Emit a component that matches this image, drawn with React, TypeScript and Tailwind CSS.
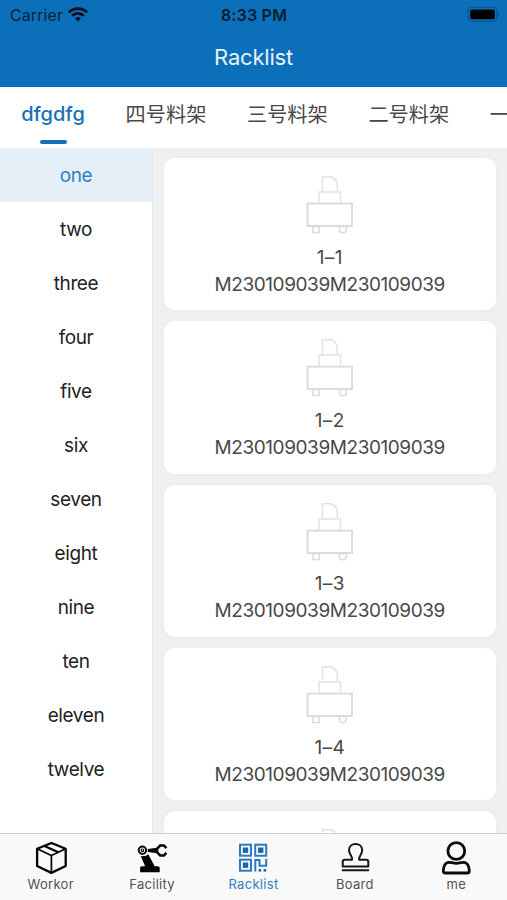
import type { ReactNode } from 'react';

const rows = ['one', 'two', 'three', 'four', 'five', 'six', 'seven', 'eight', 'nine', 'ten', 'eleven', 'twelve'];
const racks = ['四号料架', '三号料架', '二号料架', '一号料架'];
const cards = ['1–1', '1–2', '1–3', '1–4'];

function Wifi() {
  return (
    <svg width="20" height="15" viewBox="0 0 20 15" fill="none" stroke="#071018" strokeWidth="2.7">
      <path d="M.9 5.3a13 13 0 0 1 18.2 0" />
      <path d="M4.2 8.8a8.3 8.3 0 0 1 11.6 0" />
      <path d="m10 14.4-2.9-2.9a4.1 4.1 0 0 1 5.8 0z" fill="#071018" stroke="none" />
    </svg>
  );
}

function Battery() {
  return (
    <svg width="34" height="16" viewBox="0 0 34 16">
      <rect x="1" y=".3" width="29" height="14" rx="4" fill="none" stroke="#095590" strokeWidth="1.3" />
      <rect x="3.2" y="2.4" width="24.6" height="9.8" rx="2" fill="#000" />
      <path d="M31.3 5.2v4c1.8-.5 1.8-3.5 0-4z" fill="#095590" />
    </svg>
  );
}

function Machine() {
  return (
    <svg width="48" height="60" viewBox="0 0 48 60" fill="none" strokeWidth="1.5">
      <path d="M16.5 16.5V1.7h8.6q5.4 2.2 6.2 7.3v7.5" stroke="#e8e1e1" />
      <path d="M13 27.5V17h21.5v10.5" stroke="#eae0e0" />
      <rect x="1.6" y="28.6" width="44.4" height="22.4" stroke="#dcdadb" strokeWidth="1.9" />
      <rect x="7" y="51.6" width="6.2" height="6" stroke="#dddadb" />
      <path d="M33.5 51.6h6.8v3.2c0 4-6.8 4-6.8 0z" stroke="#dddadb" />
    </svg>
  );
}

function Cube() {
  return (
    <svg width="34" height="34" viewBox="0 0 34 34" fill="none" stroke="#050505" strokeWidth="2.3" strokeLinejoin="round">
      <path d="M17.4 2 31.7 7.8v17.2l-14.3 6.9L3.1 25V7.8z" />
      <path d="m3.1 7.8 14.3 6.6 14.3-6.6M17.4 14.4v17.5" strokeWidth="1.7" />
      <path d="m9.8 4.8 14.6 6.4" strokeWidth="2.2" />
    </svg>
  );
}

function RobotArm() {
  return (
    <svg width="34" height="34" viewBox="0 0 34 34" fill="none" stroke="#050505">
      <circle cx="7.4" cy="9.3" r="3.7" strokeWidth="2" />
      <circle cx="7.4" cy="9.3" r="1.3" strokeWidth="1.1" />
      <path d="M12.8 8.1 22 6.8v5.4l-9.2-1.3z" fill="#050505" stroke="none" />
      <path d="m31.4 7.2-2.5-2.7h-3.7l-3.1 3.3v3.5l3.1 3.1h3.7l2.5-2.6" strokeWidth="2.5" />
      <path d="m5.8 15.3 5.5-.6 1.8-1.7 6.6 12.2h3.1c1.2 0 1.9.8 1.9 1.8v4.3H5.1V27c0-1 .7-1.8 1.9-1.8h3.1z" fill="#050505" stroke="none" />
    </svg>
  );
}

function CodeGrid() {
  return (
    <svg width="34" height="34" viewBox="0 0 34 34" fill="none" stroke="#2b7ac0" strokeWidth="2">
      <rect x="4" y="3.7" width="11" height="11" />
      <rect x="19.2" y="3.7" width="11" height="11" />
      <rect x="4" y="18.7" width="11" height="11" />
      <g fill="#1767b0" stroke="none">
        <rect x="6.8" y="6.5" width="5.4" height="5.4" />
        <rect x="22" y="6.5" width="5.4" height="5.4" />
        <rect x="6.8" y="21.5" width="5.4" height="5.4" />
        <rect x="22.6" y="28" width="2.6" height="2.6" />
        <rect x="27.6" y="28" width="2.6" height="2.6" />
      </g>
      <path d="M19.3 30.6V18.9h4.2v5.9h6.7v-7" />
    </svg>
  );
}

function Stamp() {
  return (
    <svg width="34" height="34" viewBox="0 0 34 34" fill="none" stroke="#151515" strokeWidth="2" strokeLinejoin="round" strokeLinecap="round">
      <path d="M14 18.7c1-3.2-3-5.3-3-9.5 0-8.4 13.2-8.4 13.2 0 0 4.2-4 6.3-3 9.5h7c1.6 0 2.1.8 2.1 2.1v4.8H4.7v-4.8c0-1.3.7-2.1 2.1-2.1z" />
      <path d="M4.7 29.3h25.6" />
    </svg>
  );
}

function Person() {
  return (
    <svg width="34" height="34" viewBox="0 0 34 34" fill="none" stroke="#0b0b0b" strokeWidth="2.8" strokeLinejoin="round">
      <circle cx="17.3" cy="10" r="8.4" />
      <path d="M9.8 21.3c2.7 0 3.7 1 7.5 1s4.8-1 7.5-1c3.8 0 5.5 4.7 5.5 8.6 0 1.5-.7 2.1-2 2.1h-22c-1.3 0-2-.6-2-2.1 0-3.9 1.7-8.6 5.5-8.6z" />
    </svg>
  );
}

const navigation: { label: string; icon: ReactNode; active?: boolean }[] = [
  { label: 'Workor', icon: <Cube /> },
  { label: 'Facility', icon: <RobotArm /> },
  { label: 'Racklist', icon: <CodeGrid />, active: true },
  { label: 'Board', icon: <Stamp /> },
  { label: 'me', icon: <Person /> },
];

function RackCard({ label }: { label?: string }) {
  return (
    <article className="flex h-[152.3px] shrink-0 flex-col items-center rounded-[11px] bg-white pt-[17px] text-[19px] leading-[27px] text-[#484848] shadow-[0_0_7px_#00000008]">
      <Machine />
      {label && (
        <>
          <span className="mt-[8.5px] tracking-[0.4px]">{label}</span>
          <span className="tracking-[-0.43px]">M230109039M230109039</span>
        </>
      )}
    </article>
  );
}

export default function App() {
  return (
    <div className="flex h-[900px] w-[507px] flex-col overflow-hidden bg-white font-['Inter','Noto_Sans_CJK_SC',sans-serif]">
      <header className="h-[87px] shrink-0 bg-[#0c6fb9]">
        <div className="grid h-[29px] grid-cols-3 items-center pl-[10px] pr-[6px] text-[#09233a]">
          <div className="flex items-center gap-[5px] text-[16px] tracking-[0.1px]">
            <span>Carrier</span>
            <Wifi />
          </div>
          <span className="pr-[3px] text-center text-[16px] font-semibold tracking-[0.2px] text-[#061d30]">8:33 PM</span>
          <div className="flex justify-end"><Battery /></div>
        </div>
        <h1 className="pt-[12px] text-center text-[22px] leading-[32px] tracking-[-0.2px] text-[#e5f2fc]">Racklist</h1>
      </header>

      <nav className="flex h-[61px] shrink-0 gap-[40.6px] overflow-hidden pl-[21px] text-[20.2px] text-[#484848]">
        <button className="flex w-[64px] shrink-0 flex-col items-center text-[#1670b7]">
          <span className="h-[53px] pt-[12px] text-[20px] font-medium leading-[30px]">dfgdfg</span>
          <span className="h-[4px] w-[27px] rounded-full bg-[#1670b7]" />
        </button>
        {racks.map((rack) => (
          <button key={rack} className="flex w-[80.8px] shrink-0 pt-[13px] leading-[30px] whitespace-nowrap">{rack}</button>
        ))}
      </nav>

      <main className="flex min-h-0 flex-1">
        <aside className="w-[152px] shrink-0 text-[19px] tracking-[-0.4px] text-[#222]">
          {rows.map((row, index) => (
            <button key={row} className={index === 0 ? 'flex h-[54px] w-full items-center justify-center bg-[#e4eff8] pt-[2px] text-[#2f80c5]' : 'flex h-[54px] w-full items-center justify-center pt-[2px]'}>
              {row}
            </button>
          ))}
        </aside>
        <section className="flex flex-1 flex-col gap-[11px] overflow-hidden border-l border-[#e5eaee] bg-[#eff0f1] pt-[10.2px] pr-[11px] pl-[10.5px]">
          {cards.map((card) => (
            <RackCard key={card} label={card} />
          ))}
          <RackCard />
        </section>
      </main>

      <footer className="grid h-[67px] shrink-0 grid-cols-5 border-t-[1.5px] border-[#cfcfcf] bg-[#f9f9f9]">
        {navigation.map(({ label, icon, active }) => (
          <button key={label} className={active ? 'flex flex-col items-center pt-[7px] text-[#2e7fc5]' : 'flex flex-col items-center pt-[7px] text-[#515151]'}>
            {icon}
            <span className="text-[13px] leading-[18px] tracking-[0.3px]">{label}</span>
          </button>
        ))}
      </footer>
    </div>
  );
}
